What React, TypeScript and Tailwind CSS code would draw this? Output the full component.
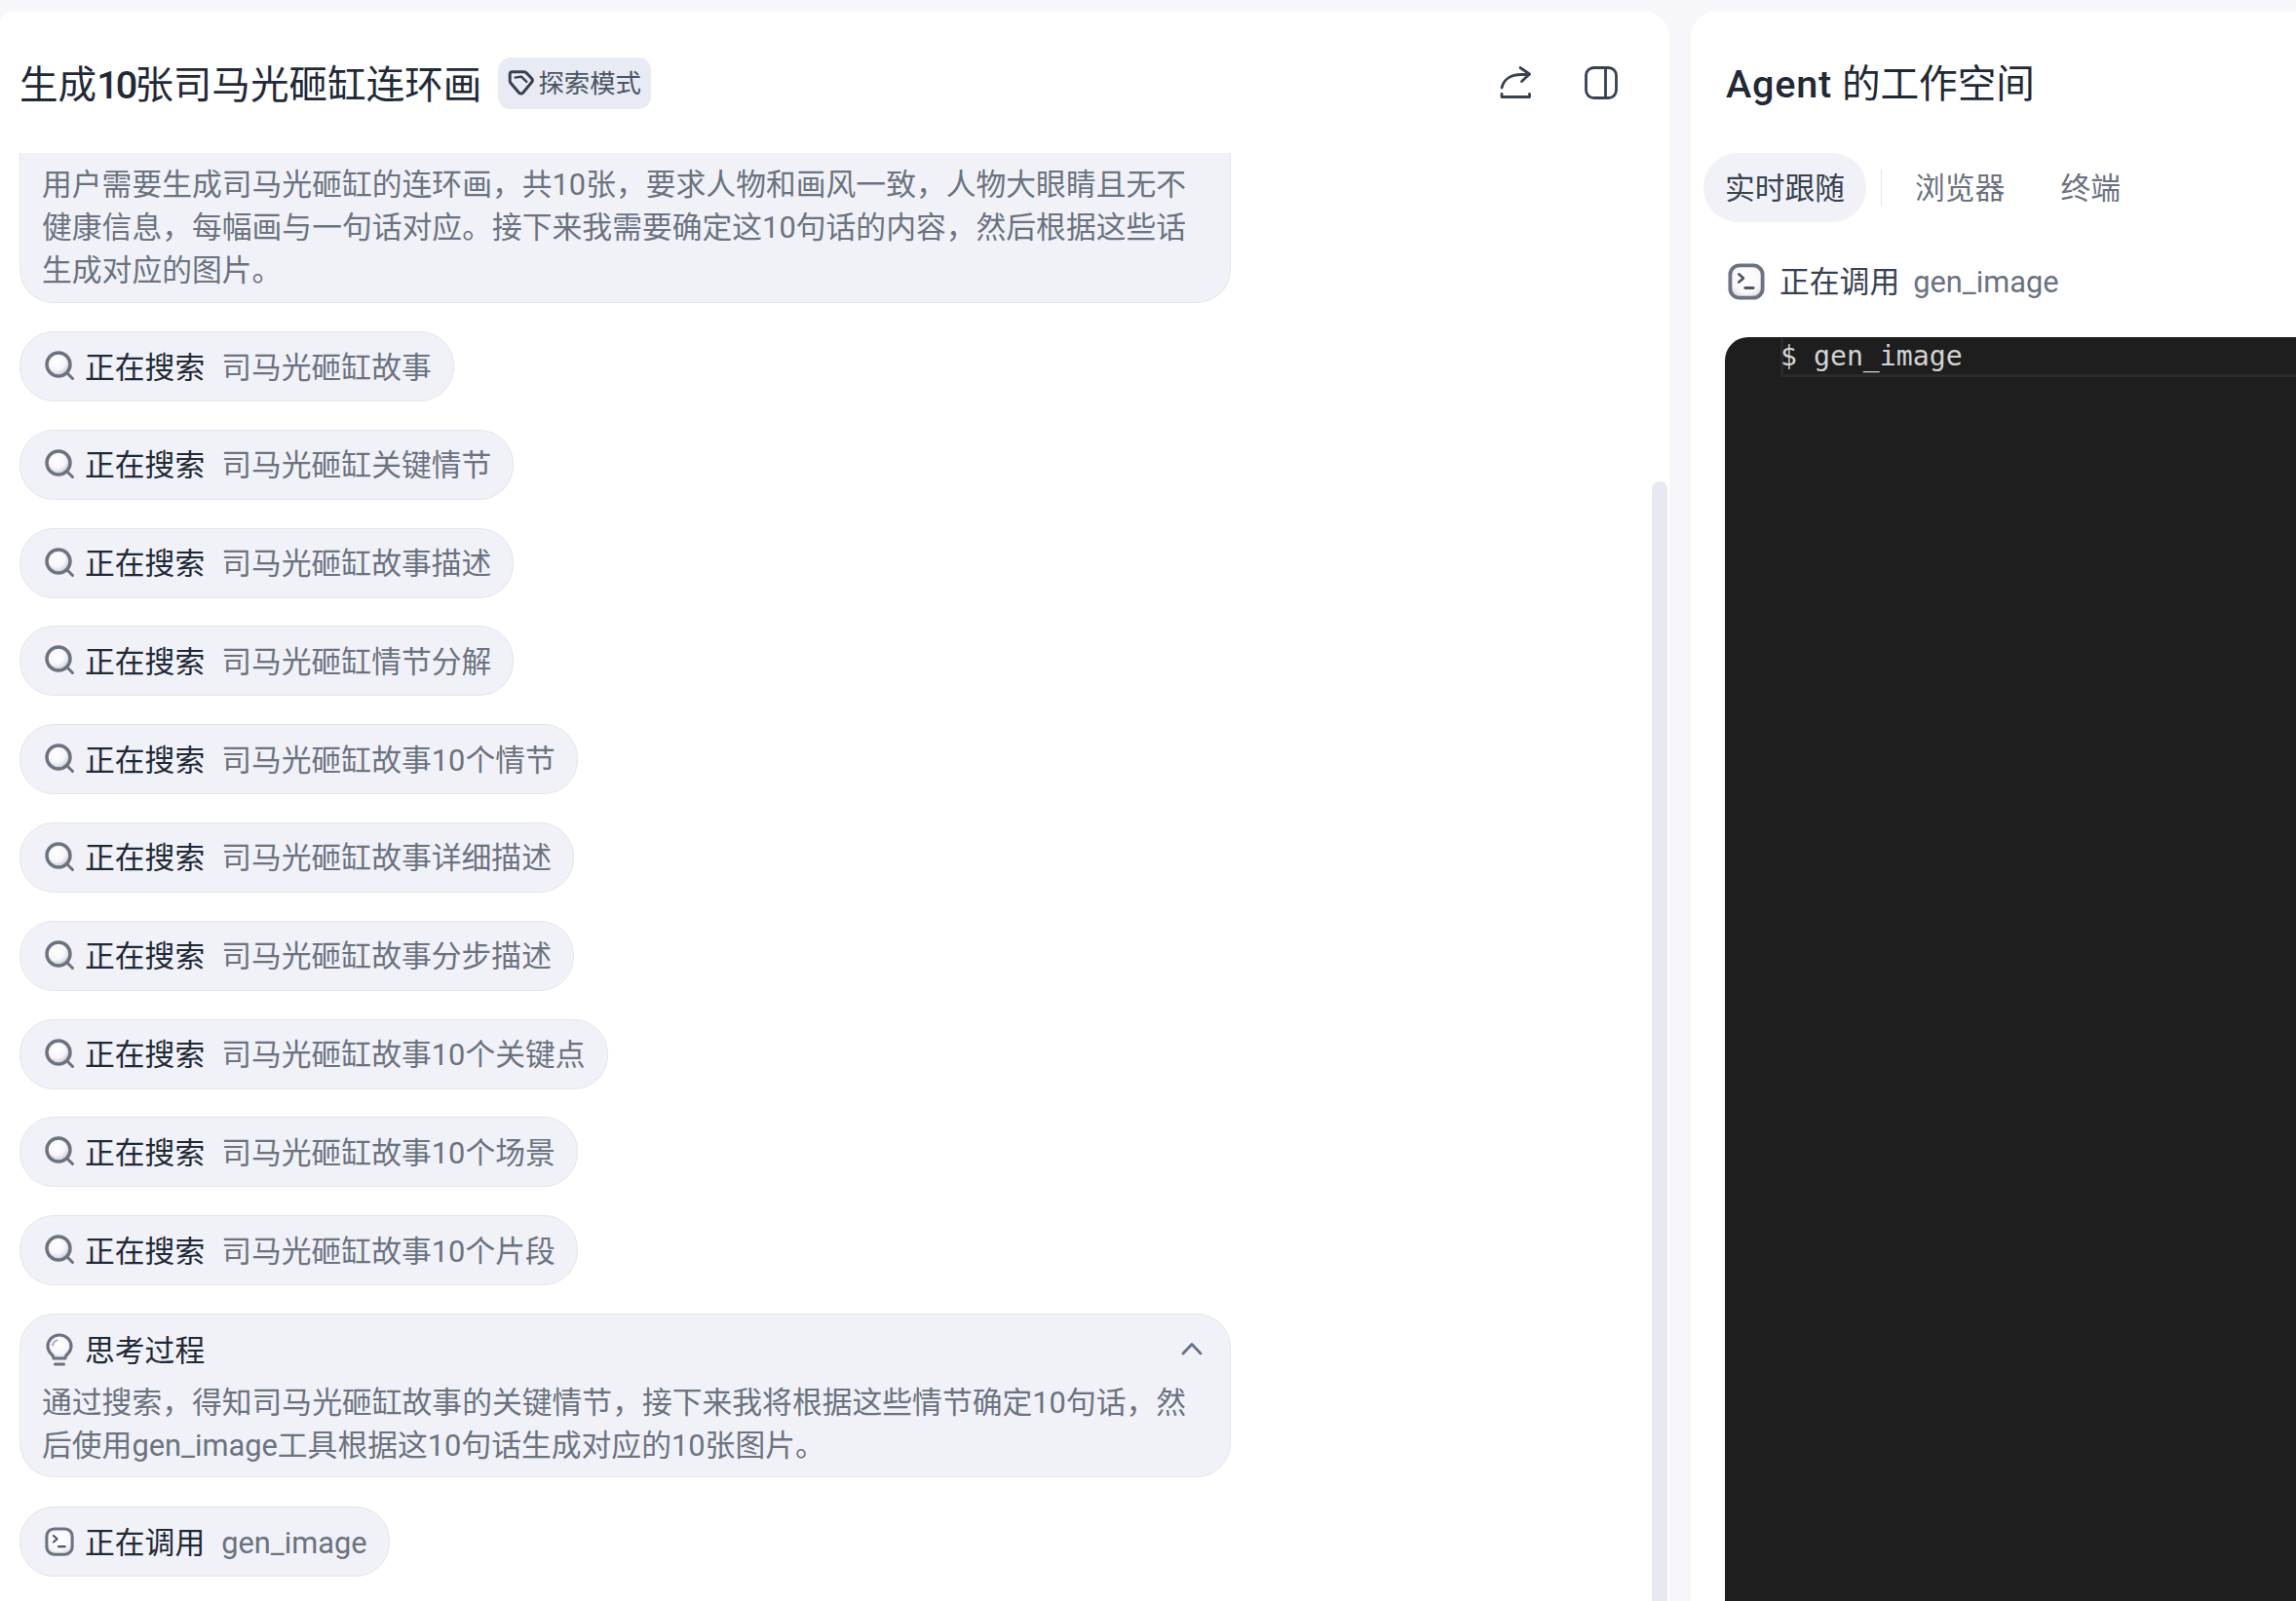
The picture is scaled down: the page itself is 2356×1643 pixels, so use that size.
import { useId } from "react";

const sans = "font-['Roboto','Noto_Sans_CJK_SC',sans-serif]";

const searches = [
  "司马光砸缸故事",
  "司马光砸缸关键情节",
  "司马光砸缸故事描述",
  "司马光砸缸情节分解",
  "司马光砸缸故事10个情节",
  "司马光砸缸故事详细描述",
  "司马光砸缸故事分步描述",
  "司马光砸缸故事10个关键点",
  "司马光砸缸故事10个场景",
  "司马光砸缸故事10个片段",
];

const SearchIcon = () => {
  const id = useId();
  return (
    <svg width="32" height="32" viewBox="0 0 32 32" fill="none" className="shrink-0">
      <defs>
        <radialGradient id={id} cx="0.42" cy="0.38" r="0.65">
          <stop offset="0" stopColor="#ffffff" />
          <stop offset="0.55" stopColor="#f7f7fa" />
          <stop offset="1" stopColor="#bfc3cf" />
        </radialGradient>
      </defs>
      <circle cx="14" cy="14" r="12" fill={`url(#${id})`} stroke="#6b7280" strokeWidth="3.400" />
      <path d="M23 23l5.500 5.500" stroke="#6b7280" strokeWidth="3" strokeLinecap="round" />
    </svg>
  );
};

const BulbIcon = () => {
  const id = useId();
  return (
    <svg width="32" height="36" viewBox="0 0 32 36" fill="none" className="shrink-0">
      <defs>
        <radialGradient id={id} cx="0.48" cy="0.42" r="0.65">
          <stop offset="0" stopColor="#ffffff" />
          <stop offset="0.6" stopColor="#f7f7fa" />
          <stop offset="1" stopColor="#c3c7d2" />
        </radialGradient>
      </defs>
      <path
        d="M15 3C8.300 3 3 8.200 3 14.500c0 4 2.100 6.600 4.200 8.700 1.200 1.200 1.900 2.300 1.900 3.800h11.800c0-1.500.7-2.600 1.900-3.800 2.100-2.100 4.200-4.700 4.200-8.700C27 8.200 21.700 3 15 3z"
        fill={`url(#${id})`}
        stroke="#6b7280"
        strokeWidth="3.200"
        strokeLinejoin="round"
      />
      <path d="M10.500 33h9" stroke="#6b7280" strokeWidth="3" strokeLinecap="round" />
      <path d="M8 13.500c.4-2.600 2-4.300 4.500-5" stroke="#9ca3af" strokeWidth="1.800" strokeLinecap="round" />
    </svg>
  );
};

const TerminalIcon = ({ size = 30 }: { size?: number }) => {
  const id = useId();
  return (
    <svg width={size} height={size} viewBox="0 0 32 32" fill="none" className="shrink-0">
      <defs>
        <radialGradient id={id} cx="0.5" cy="0.42" r="0.72">
          <stop offset="0" stopColor="#ffffff" />
          <stop offset="0.6" stopColor="#f7f7fa" />
          <stop offset="1" stopColor="#c3c7d2" />
        </radialGradient>
      </defs>
      <rect x="2" y="2" width="28" height="28" rx="8" fill={`url(#${id})`} stroke="#6b7280" strokeWidth="3.200" />
      <path d="M9.500 9.500l4 3.500-4 3.500" stroke="#4b5563" strokeWidth="2.200" strokeLinecap="round" strokeLinejoin="round" />
      <path d="M15 21.500h7" stroke="#4b5563" strokeWidth="2.400" strokeLinecap="round" />
    </svg>
  );
};

const Pill = ({ label, value, icon }: { label: string; value: string; icon: React.ReactNode }) => (
  <div className="flex h-[72px] w-fit items-center rounded-[35px] border border-[#e3e5ee] bg-[#f1f2f8] pl-[25px] pr-[22px]">
    <div className="w-[32px] shrink-0">{icon}</div>
    <span className="ml-[9px] whitespace-nowrap pt-[3px] text-[#1f2937]">{label}</span>
    <span className="ml-[17px] whitespace-nowrap pt-[3px] text-[#6b7280]">{value}</span>
  </div>
);

export default function App() {
  return (
    <div className={`${sans} flex h-[1643px] w-[2356px] overflow-hidden bg-[#f7f7fb] pt-[12px] text-[30.8px] leading-[44px]`}>
      {/* Chat panel */}
      <div className="flex h-full w-[1713px] shrink-0 flex-col overflow-hidden rounded-tl-[10px] rounded-tr-[26px] bg-white">
        <div className="flex h-[145px] shrink-0 items-center pl-[20px] pr-[53px] pt-[1px]">
          <h1 className="pt-[5px] text-[39.6px] font-normal leading-[52px] text-[#1f2937]">
            生成<span className="font-medium tracking-[-3px]">10</span>张司马光砸缸连环画
          </h1>
          <div className="ml-[17px] flex h-[53px] items-center rounded-[13px] bg-[#e8ebf3] pl-[9px] pr-[10px] text-[26.4px] text-[#4b5563]">
            <svg width="30" height="30" viewBox="0 0 28 28" fill="none" className="mr-[2px] shrink-0">
              <path
                d="M5 3.500h11.500c1 0 1.700.4 2.400 1.100l4.800 5c1.100 1.200 1.100 2.800.1 4L15.500 23.500c-1 1.100-2.700 1.100-3.700 0L4 14.500c-.7-.8-1-1.600-1-2.600V5.500c0-1.200.9-2 2-2z"
                stroke="#374151"
                strokeWidth="2.800"
                strokeLinejoin="round"
              />
              <path d="M8 9l6-1 5 5" stroke="#374151" strokeWidth="2.200" strokeLinecap="round" strokeLinejoin="round" />
            </svg>
            <span className="pt-[2px]">探索模式</span>
          </div>
          <div className="ml-auto flex items-center gap-[53px]">
            <svg width="34" height="36" viewBox="0 0 34 36" fill="none" stroke="#374151" strokeWidth="2.800" strokeLinecap="round" strokeLinejoin="round">
              <path d="M2 23C4 14 12 9.500 22 9.500H30" />
              <path d="M21 2.500l9.500 6.500-8 7.500" />
              <path d="M2 29.500v3h28.500v-3" />
            </svg>
            <svg width="34" height="34" viewBox="0 0 34 34" fill="none" stroke="#374151" strokeWidth="2.800">
              <rect x="1.500" y="1.500" width="31" height="31" rx="8" />
              <path d="M21.500 1.500v31" />
            </svg>
          </div>
        </div>
        <div className="flex min-h-0 flex-1">
          <div className="flex min-w-0 flex-1 flex-col overflow-hidden pl-[20px]">
            <div className="w-[1243px] shrink-0 rounded-b-[35px] border-x border-b border-[#e3e5ee] bg-[#f1f2f8] pb-[10px] pl-[22px] pr-[20px] pt-[11px] text-[#6b7280]">
              用户需要生成司马光砸缸的连环画，共10张，要求人物和画风一致，人物大眼睛且无不健康信息，每幅画与一句话对应。接下来我需要确定这10句话的内容，然后根据这些话生成对应的图片。
            </div>
            <div className="mt-[29px] flex flex-col gap-[28.8px]">
              {searches.map((s) => (
                <Pill key={s} label="正在搜索" value={s} icon={<SearchIcon />} />
              ))}
            </div>
            <div className="mt-[29px] w-[1243px] shrink-0 rounded-[35px] border border-[#e3e5ee] bg-[#f1f2f8] pb-[9px] pl-[22px] pr-[20px] pt-[14px]">
              <div className="flex h-[44px] items-center pl-[3px]">
                <BulbIcon />
                <span className="ml-[9px] pt-[3px] text-[#1f2937]">思考过程</span>
                <svg width="26" height="26" viewBox="0 0 26 26" fill="none" className="ml-auto mr-[6px]">
                  <path d="M4 17l9-9.500 9 9.500" stroke="#64748b" strokeWidth="2.800" strokeLinecap="round" strokeLinejoin="round" />
                </svg>
              </div>
              <div className="mt-[11px] text-[#6b7280]">
                通过搜索，得知司马光砸缸故事的关键情节，接下来我将根据这些情节确定10句话，然后使用gen_image工具根据这10句话生成对应的10张图片。
              </div>
            </div>
            <div className="mt-[30px] shrink-0">
              <Pill label="正在调用" value="gen_image" icon={<TerminalIcon />} />
            </div>
          </div>
          {/* Scrollbar */}
          <div className="mr-[2px] flex w-[16px] shrink-0 flex-col pt-[337px]">
            <div className="flex-1 rounded-t-[8px] bg-[#e6e9f2]" />
          </div>
        </div>
      </div>

      {/* Agent workspace */}
      <div className="ml-[22px] flex h-full min-w-0 flex-1 flex-col overflow-hidden rounded-tl-[26px] bg-white">
        <div className="flex h-[145px] shrink-0 items-center pl-[36px] pt-[5px]">
          <h2 className="text-[39.6px] font-normal leading-[52px] text-[#1f2937]">
            <span className="font-medium tracking-[0.8px]">Agent</span> 的工作空间
          </h2>
        </div>
        <div className="flex h-[71px] shrink-0 items-center pl-[13px]">
          <div className="flex h-[71px] w-[167px] items-center justify-center rounded-[35px] bg-[#f1f2f8] pt-[2px] text-[#374151]">实时跟随</div>
          <div className="ml-[15px] h-[37px] w-px bg-[#e3e5ee]" />
          <div className="ml-[34px] pt-[2px] text-[#6b7280]">浏览器</div>
          <div className="ml-[57px] pt-[2px] text-[#6b7280]">终端</div>
        </div>
        <div className="mt-[41px] flex h-[40px] shrink-0 items-center pl-[38px]">
          <TerminalIcon size={38} />
          <span className="ml-[15px] whitespace-nowrap pt-[2px] text-[#374151]">正在调用</span>
          <span className="ml-[14px] whitespace-nowrap pt-[2px] text-[#6b7280]">gen_image</span>
        </div>
        <div className="ml-[35px] mt-[37px] min-h-0 flex-1 rounded-tl-[24px] bg-[#1e1e1e] pl-[57px]">
          <div className="h-[41px] whitespace-pre border-b-[3px] border-l-[3px] border-[#2a2a2a] pt-[2px] font-['DejaVu_Sans_Mono',monospace] text-[28.2px] leading-[36px] text-[#d4d4d4] [text-indent:-3px]">
            $ gen_image
          </div>
        </div>
      </div>
    </div>
  );
}
